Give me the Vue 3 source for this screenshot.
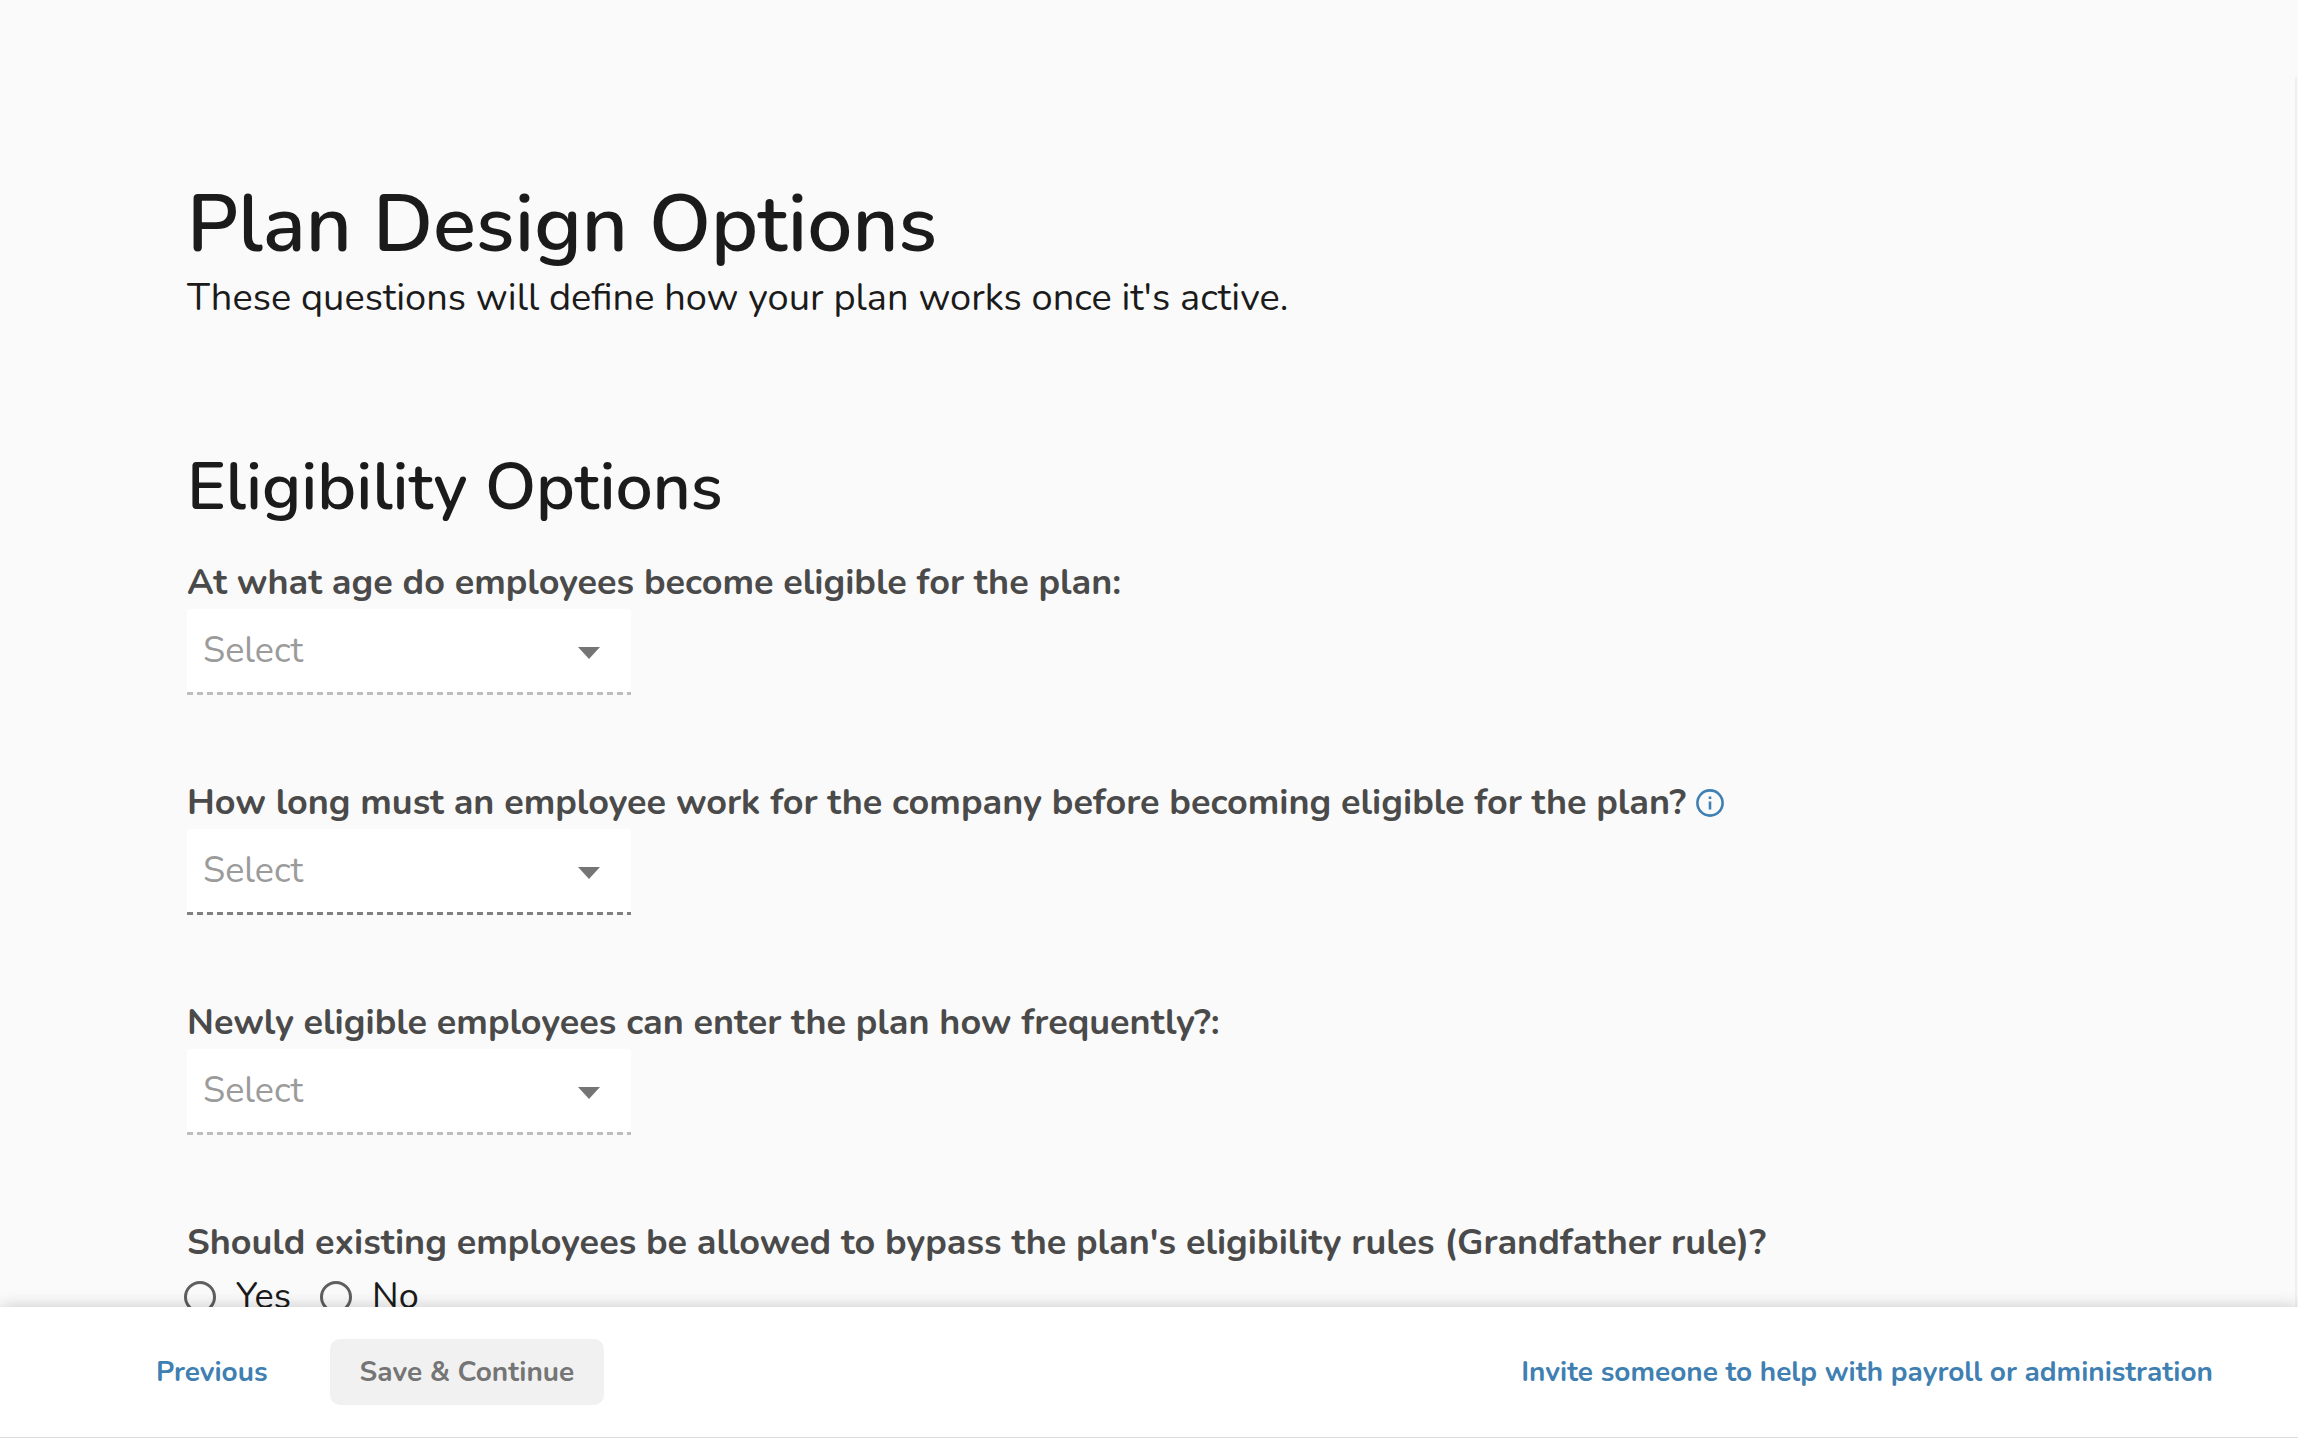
<script setup>
import { ref } from 'vue'

const questions = ref([
  { id: 'age', text: 'At what age do employees become eligible for the plan:', value: '', options: ['18', '21'] },
  { id: 'service', text: 'How long must an employee work for the company before becoming eligible for the plan?', value: '', options: ['3 months', '1 year'], info: true, strong: true },
  { id: 'entry', text: 'Newly eligible employees can enter the plan how frequently?:', value: '', options: ['Monthly', 'Quarterly'] },
])
const grandfather = ref('')
</script>

<template>
  <div class="page">
    <main class="content">
      <header class="intro">
        <h1>Plan Design Options</h1>
        <p>These questions will define how your plan works once it's active.</p>
      </header>
      <section>
        <h2>Eligibility Options</h2>
        <div v-for="q in questions" :key="q.id" class="question">
          <div class="label-row">
            <label :for="q.id">{{ q.text }}</label>
            <button v-if="q.info" class="info" type="button" aria-label="More information">
              <svg viewBox="0 0 28 28" width="28" height="28" fill="none" stroke="currentColor" stroke-width="2.6">
                <circle cx="14" cy="14" r="12.6" />
                <path d="M14 12.5V20.5" />
                <path d="M14 7.5V10" />
              </svg>
            </button>
          </div>
          <div class="select" :class="{ strong: q.strong }">
            <select :id="q.id" v-model="q.value">
              <option value="" disabled>Select</option>
              <option v-for="o in q.options" :key="o">{{ o }}</option>
            </select>
            <svg class="arrow" viewBox="0 0 22 12" width="22" height="12"><path d="M0 0H22L11 12Z" fill="currentColor" /></svg>
          </div>
        </div>
        <fieldset>
          <legend>Should existing employees be allowed to bypass the plan's eligibility rules (Grandfather rule)?</legend>
          <div class="radios">
            <label><input v-model="grandfather" type="radio" name="grandfather" value="yes">Yes</label>
            <label><input v-model="grandfather" type="radio" name="grandfather" value="no">No</label>
          </div>
        </fieldset>
      </section>
    </main>
    <footer class="actions">
      <button class="previous" type="button">Previous</button>
      <button class="save" type="button" disabled>Save &amp; Continue</button>
      <a class="invite" href="#invite">Invite someone to help with payroll or administration</a>
    </footer>
  </div>
</template>

<style>
body {
  background: #fafafa;
}
</style>

<style scoped>
.page,
.page * {
  box-sizing: border-box;
}
.page {
  display: flex;
  flex-direction: column;
  height: 100vh;
  background: #fafafa;
  color: #1b1b1b;
  font-family: Nunito, Lato, sans-serif;
}
.content {
  flex: 1;
  min-height: 0;
  margin-top: 77px;
  margin-right: 1px;
  padding: 100px 60px 60px 187px;
  border-right: 2px solid #efefef;
  overflow-y: auto;
  scrollbar-width: none;
}
h1,
h2,
p {
  margin: 0;
}
h1 {
  font-size: 80px;
  font-weight: 600;
  line-height: 96px;
}
.intro p {
  font-size: 38px;
  line-height: 50px;
}
h2 {
  margin-top: 124px;
  font-size: 66px;
  font-weight: 600;
  line-height: 80px;
}
.question {
  height: 220px;
}
h2 + .question {
  margin-top: 32px;
}
.label-row {
  display: flex;
  align-items: center;
  gap: 10px;
  height: 48px;
}
.label-row label,
legend {
  padding: 0;
  color: #4a4a4a;
  font-size: 36px;
  font-weight: 700;
  line-height: 48px;
}
.info {
  display: flex;
  padding: 0;
  border: 0;
  background: none;
  color: #3f7fb2;
}
.select {
  position: relative;
  width: 444px;
  max-width: 100%;
  margin-top: 2px;
  padding-bottom: 3px;
  background: repeating-linear-gradient(90deg, #bdbdbd 0 6px, transparent 6px 10px) bottom / 100% 3px no-repeat;
}
.select.strong {
  background-image: repeating-linear-gradient(90deg, #808080 0 6px, transparent 6px 10px);
}
select {
  display: block;
  width: 100%;
  height: 83px;
  padding: 0 64px 0 16px;
  border: 0;
  border-radius: 4px 4px 0 0;
  background: #fff;
  appearance: none;
  color: #9b9b9b;
  font-family: inherit;
  font-size: 36px;
}
.arrow {
  position: absolute;
  top: 38px;
  right: 31px;
  color: #757575;
  pointer-events: none;
}
fieldset {
  margin: 0;
  padding: 0;
  border: 0;
}
.radios {
  display: flex;
  gap: 32px;
  margin-top: 2px;
}
.radios label {
  display: flex;
  align-items: center;
  gap: 20px;
  font-size: 36px;
  line-height: 56px;
}
input {
  width: 32px;
  height: 32px;
  margin: 0 0 0 -3px;
  border: 3px solid #5f5f5f;
  border-radius: 50%;
  appearance: none;
}
input:checked {
  background: radial-gradient(#3f7fb2 50%, transparent 55%);
}
.actions {
  position: relative;
  display: flex;
  align-items: center;
  height: 131px;
  padding: 0 85px 0 156px;
  border-bottom: 1px solid #dcdcdc;
  background: #fff;
  box-shadow: 0 0 16px rgba(0, 0, 0, 0.2);
  font-size: 28px;
  font-weight: 700;
}
.actions button {
  border: 0;
  background: none;
  font: inherit;
}
.actions .previous {
  padding: 0;
  color: #3f7fb2;
}
.actions .save {
  height: 66px;
  margin-left: 62px;
  padding: 0 30px;
  border-radius: 10px;
  background: #f1f1f1;
  color: #757575;
}
.invite {
  margin-left: auto;
  color: #3f7fb2;
  text-decoration: none;
}
</style>
